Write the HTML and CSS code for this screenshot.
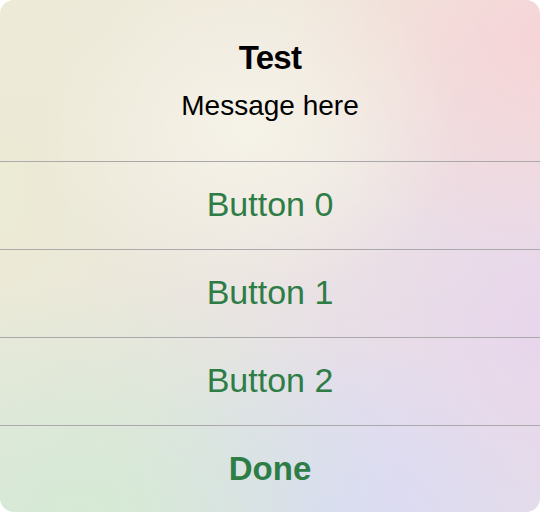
FILE: index.html
```html
<!DOCTYPE html>
<html>
<head>
<meta charset="utf-8">
<link rel="stylesheet" href="styles.css">
</head>
<body>
<div class="alert">
  <div class="head">
    <div class="title">Test</div>
    <div class="msg">Message here</div>
  </div>
  <div class="btn">Button 0</div>
  <div class="btn">Button 1</div>
  <div class="btn">Button 2</div>
  <div class="btn done">Done</div>
</div>
</body>
</html>
```
FILE: styles.css
```css
html, body {
  margin: 0;
  padding: 0;
  background: #ffffff;
}
.alert {
  width: 540px;
  height: 512px;
  border-radius: 14px;
  overflow: hidden;
  display: flex;
  flex-direction: column;
  font-family: "Liberation Sans", Arial, sans-serif;
  text-align: center;
  background:
    radial-gradient(ellipse 210px 170px at 250px 130px, rgba(246,243,232,0.95), rgba(246,243,232,0) 100%),
    radial-gradient(ellipse 260px 220px at 540px 40px, rgba(246,212,216,1), rgba(246,212,216,0) 100%),
    radial-gradient(ellipse 320px 230px at 80px 512px, rgba(213,234,212,1), rgba(213,234,212,0) 100%),
    radial-gradient(ellipse 220px 180px at 330px 512px, rgba(218,218,246,1), rgba(218,218,246,0) 100%),
    radial-gradient(ellipse 280px 320px at 540px 330px, rgba(232,214,236,1), rgba(232,214,236,0) 100%),
    radial-gradient(ellipse 280px 420px at 0px 200px, rgba(236,235,212,1), rgba(236,235,212,0) 100%),
    linear-gradient(180deg, #efe9dc 0%, #ebe4e2 50%, #e0e1e8 100%);
}
.head {
  border-bottom: 1px solid #aaa8aa;
  display: flex;
  flex-direction: column;
  align-items: center;
  padding-top: 38px;
  box-sizing: border-box;
  height: 162px;
}
.title {
  font-size: 33px;
  font-weight: bold;
  line-height: 40px;
  letter-spacing: -0.7px;
  color: #000;
}
.msg {
  font-size: 28px;
  line-height: 34px;
  margin-top: 11px;
  color: #000;
}
.btn {
  height: 88px;
  box-sizing: border-box;
  border-bottom: 1px solid #aaa8aa;
  display: flex;
  align-items: center;
  justify-content: center;
  font-size: 34px;
  color: #2e7d46;
  padding-bottom: 2px;
}
.btn.done {
  border-bottom: none;
  height: 86px;
  font-weight: bold;
  font-size: 33px;
  padding-bottom: 1px;
}
```
